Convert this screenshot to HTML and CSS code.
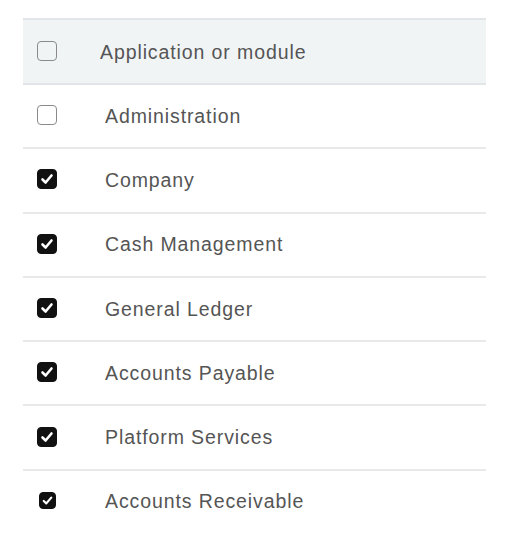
FILE: index.html
```html
<!DOCTYPE html>
<html lang="en">
<head>
    <meta charset="UTF-8">
    <meta name="viewport" content="width=device-width, initial-scale=1.0">
    <title>Modules</title>
    <link rel="stylesheet" href="styles.css">
</head>
<body>
    <div class="module-list">
        <div class="row head">
            <span class="box"></span>
            <span class="label">Application or module</span>
        </div>
        <div class="row">
            <span class="box"></span>
            <span class="label">Administration</span>
        </div>
        <div class="row">
            <span class="box checked"><svg viewBox="0 0 18 18"><path d="M4.5 9.5 L7.6 12.5 L13.5 5.5" /></svg></span>
            <span class="label">Company</span>
        </div>
        <div class="row">
            <span class="box checked"><svg viewBox="0 0 18 18"><path d="M4.5 9.5 L7.6 12.5 L13.5 5.5" /></svg></span>
            <span class="label">Cash Management</span>
        </div>
        <div class="row">
            <span class="box checked"><svg viewBox="0 0 18 18"><path d="M4.5 9.5 L7.6 12.5 L13.5 5.5" /></svg></span>
            <span class="label">General Ledger</span>
        </div>
        <div class="row">
            <span class="box checked"><svg viewBox="0 0 18 18"><path d="M4.5 9.5 L7.6 12.5 L13.5 5.5" /></svg></span>
            <span class="label">Accounts Payable</span>
        </div>
        <div class="row">
            <span class="box checked"><svg viewBox="0 0 18 18"><path d="M4.5 9.5 L7.6 12.5 L13.5 5.5" /></svg></span>
            <span class="label">Platform Services</span>
        </div>
        <div class="row last">
            <span class="box checked small"><svg viewBox="0 0 18 18"><path d="M4.5 9.5 L7.6 12.5 L13.5 5.5" /></svg></span>
            <span class="label">Accounts Receivable</span>
        </div>
    </div>
</body>
</html>
```

FILE: styles.css
```css
body {
    margin: 0;
    background-color: #ffffff;
    font-family: "Liberation Sans", Arial, sans-serif;
}
.module-list {
    display: flex;
    flex-direction: column;
    width: 463px;
    margin: 18px 0 0 23px;
}
.row {
    display: flex;
    align-items: center;
    height: 62.3px;
    border-bottom: 2px solid #e7e9ea;
    padding-left: 14px;
}
.row.head {
    height: 63px;
    background-color: #f1f4f5;
    border-top: 2px solid #e2e5e7;
    border-bottom: 2px solid #e2e5e7;
}
.row.last {
    border-bottom: none;
}
.box {
    width: 20px;
    height: 20px;
    border: 1.8px solid #8a8a8a;
    border-radius: 4px;
    box-sizing: border-box;
    display: flex;
    flex-shrink: 0;
    margin-top: -2px;
}
.box.checked {
    background-color: #111111;
    border-color: #111111;
}
.box.small {
    width: 17px;
    height: 17px;
    margin-left: 2px;
}
.box svg {
    width: 100%;
    height: 100%;
}
.box svg path {
    fill: none;
    stroke: #ffffff;
    stroke-width: 2.6;
    stroke-linecap: round;
    stroke-linejoin: round;
}
.label {
    margin-left: 48px;
    font-size: 19.5px;
    letter-spacing: 0.9px;
    color: #555555;
}
.row.head .label {
    margin-left: 43px;
    margin-top: 2px;
}
.row.last .label {
    margin-left: 49px;
}
```
